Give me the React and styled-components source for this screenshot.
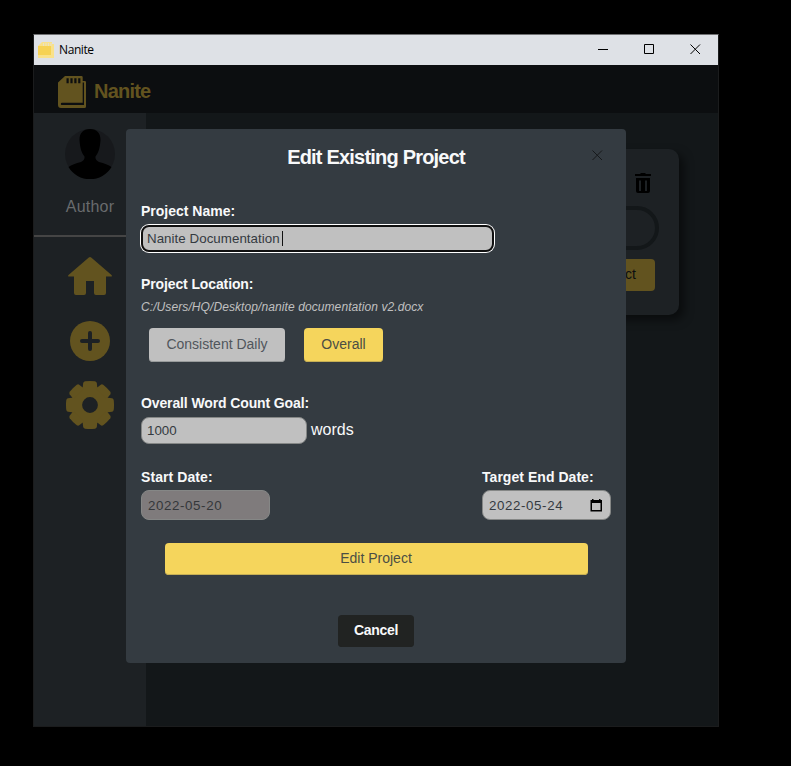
import React from "react";
import styled, { createGlobalStyle } from "styled-components";

const Global = createGlobalStyle`
  * { box-sizing: border-box; }
  body { margin: 0; background: #000; font-family: "Liberation Sans", Arial, sans-serif; }
`;

const Desktop = styled.div`
  height: 766px;
  padding: 34px 0 0 33px;
  background: #000;
  overflow: hidden;
`;
const Window = styled.div`
  position: relative;
  width: 686px;
  height: 693px;
  border: 1px solid #1b1c1d;
  border-top-color: #6f7072;
  background: #131719;
  display: flex;
  flex-direction: column;
`;
const TitleBar = styled.div`
  height: 30px;
  flex: none;
  background: #dee1e6;
  display: flex;
  align-items: center;
  color: #000;
  padding-left: 4px;
`;
const AppName = styled.span`
  flex: 1;
  margin-left: 5px;
  font: 12px/16px "Open Sans", "Noto Sans", sans-serif;
  letter-spacing: -0.4px;
`;
const WindowControls = styled.div`
  display: grid;
  grid-template-columns: repeat(3, 46px);
  justify-items: center;
  padding-bottom: 2px;
`;
const Header = styled.header`
  height: 48px;
  flex: none;
  background: #0c0e10;
  display: flex;
  align-items: center;
  padding: 5px 0 0 24px;
  color: #62531f;
`;
const Brand = styled.h1`
  margin: 0 0 1px 8px;
  font-size: 20px;
  line-height: 24px;
  letter-spacing: -0.8px;
`;
const Body = styled.div`
  flex: 1;
  display: flex;
`;
const Sidebar = styled.nav`
  width: 112px;
  background: #1d2124;
  display: flex;
  flex-direction: column;
  align-items: center;
  color: #62531f;
`;
const Profile = styled.div`
  width: 100%;
  height: 124px;
  padding-top: 16px;
  border-bottom: 2px solid #454545;
  display: flex;
  flex-direction: column;
  align-items: center;
  gap: 18px;
`;
const Author = styled.div`
  color: #696b6d;
  font-size: 16px;
  line-height: 20px;
  letter-spacing: 0.2px;
`;
const NavIcons = styled.div`
  display: flex;
  flex-direction: column;
  align-items: center;
  padding-top: 20px;
`;
const Main = styled.main`
  flex: 1;
  padding: 36px 39px;
  display: flex;
  justify-content: flex-end;
  align-items: flex-start;
`;
const Card = styled.section`
  width: 240px;
  height: 166px;
  border-radius: 10px;
  background: #1d2124;
  box-shadow: 5px 5px 10px rgba(0, 0, 0, 0.5);
  padding: 24px 24px 0;
  display: flex;
  flex-direction: column;
  align-items: flex-end;
`;
const TrashSlot = styled.div`
  height: 33px;
  padding-right: 4px;
`;
const Meter = styled.div`
  width: 190px;
  height: 44px;
  flex: none;
  margin-right: -4px;
  border: 4px solid #131719;
  border-radius: 22px;
`;
const CardButton = styled.button`
  margin-top: 9px;
  width: 130px;
  height: 32px;
  border: 0;
  border-radius: 4px;
  background: #62531f;
  color: #0c0e10;
  font: 14px "Liberation Sans", sans-serif;
  text-align: right;
  padding: 0 19px 3px 0;
`;

const Modal = styled.div`
  position: absolute;
  left: 92px;
  top: 94px;
  width: 500px;
  height: 534px;
  border-radius: 4px;
  background: #343b41;
  padding: 0 15px;
  color: #f8f9fa;
  display: flex;
  flex-direction: column;
  align-items: flex-start;
`;
const ModalHeader = styled.div`
  width: 100%;
  height: 72px;
  padding-top: 15px;
  display: grid;
  grid-template-columns: 1fr auto 1fr;
  align-items: start;
`;
const Title = styled.h2`
  grid-column: 2;
  margin: 0;
  font-size: 20px;
  line-height: 26px;
  letter-spacing: -0.8px;
`;
const Close = styled.button`
  justify-self: end;
  margin: 6px 8px 0 0;
  padding: 0;
  border: 0;
  height: 11px;
  background: none;
  display: flex;
`;
const Label = styled.label`
  display: block;
  margin-top: ${(p) => p.$top || 0}px;
  font-size: 14px;
  font-weight: bold;
  line-height: 20px;
  letter-spacing: ${(p) => p.$track || "0"};
  white-space: nowrap;
`;
const Field = styled.div`
  display: flex;
  align-items: center;
  width: ${(p) => p.$w}px;
  height: ${(p) => p.$h}px;
  padding: 0 6px 0 5px;
  border: 1px solid #858786;
  border-radius: 8px;
  background: ${(p) => (p.$disabled ? "#7f7b7c" : "#c0c0c0")};
  color: ${(p) => (p.$disabled ? "#34373a" : "#343a40")};
  font-size: 13.33px;
`;
const FocusField = styled(Field)`
  margin-top: 4px;
  padding: 0 4px;
  border: 2px solid #101010;
  box-shadow: 0 0 0 1px #fff;
  letter-spacing: 0.04px;
`;
const Caret = styled.i`
  width: 1px;
  height: 15px;
  margin-left: 2px;
  background: #111;
`;
const Path = styled.div`
  font-size: 12px;
  font-style: italic;
  line-height: 16px;
  color: #c0c0c0;
  letter-spacing: 0.09px;
  margin: 5px 0 13px;
  white-space: nowrap;
`;
const Modes = styled.div`
  display: flex;
  gap: 19px;
  padding-left: 8px;
`;
const Button = styled.button`
  width: ${(p) => p.$w}px;
  height: ${(p) => p.$h}px;
  flex: none;
  padding: 0 0 2px;
  border: 0;
  border-radius: 4px;
  background: ${(p) => p.$bg};
  color: ${(p) => p.$fg || "#4b4e44"};
  box-shadow: inset 0 -1px 0 ${(p) => p.$edge || p.$bg};
  font: ${(p) => (p.$bold ? "bold" : "normal")} 14px "Liberation Sans", sans-serif;
  letter-spacing: ${(p) => p.$track || "0"};
`;
const GoalRow = styled.div`
  display: flex;
  align-items: center;
  gap: 4px;
  margin: 4px 0 23px;
  font-size: 16px;
  line-height: 18px;
`;
const Suffix = styled.span`
  padding-bottom: 2px;
`;
const Dates = styled.div`
  width: 100%;
  display: flex;
  justify-content: space-between;
`;
const DateField = styled(Field)`
  margin-top: 3px;
  padding: 0 6px;
  justify-content: space-between;
  letter-spacing: 0.6px;
`;
const Actions = styled.div`
  width: 100%;
  padding-top: 23px;
  display: flex;
  flex-direction: column;
  align-items: center;
  gap: 40px;
`;

const SdIcon = () => (
  <svg width="28" height="32" viewBox="0 0 28 32" fill="currentColor">
    <path
      fillRule="evenodd"
      d="M7 0H23.500Q24.700 0 24.700 1.200V5H26.800Q28 5 28 6.200V30.500Q28 32 26.500 32H3Q0 32 0 29V6.500ZM8.500 2.300V7.200H10.700V2.300ZM12.400 2.300V7.200H14.600V2.300ZM16.300 2.300V7.200H18.500V2.300ZM20.200 2.300V7.200H22.400V2.300ZM24.700 6.500V26.800H4Q2.800 26.800 2.800 28T4 29H26V6.500Z"
    />
  </svg>
);
const TrashIcon = () => (
  <svg width="16" height="20" viewBox="0 0 16 20">
    <path
      fillRule="evenodd"
      d="M1 5H15V18Q15 20 13 20H3Q1 20 1 18ZM4 7.500V18H6V7.500ZM10 7.500V18H12V7.500ZM0 1H5L6 0H10L11 1H16V3H0Z"
      fill="#000"
    />
  </svg>
);
const CloseIcon = ({ color }) => (
  <svg width="11" height="11" viewBox="0 0 11 11" stroke={color} strokeWidth="1">
    <path d="M.5 .5 10 10M10 .5 .5 10" />
  </svg>
);
const TEETH = [0, 45, 90, 135, 180, 225, 270, 315];

export default function App() {
  return (
    <>
      <Global />
      <Desktop>
        <Window>
          <TitleBar>
            <svg width="16" height="16" viewBox="0 0 16 16">
              <path d="M4 0H14V2H16V16H0V4Z" fill="#f9e18a" />
              <path d="M0 4H13V13H0Z" fill="#f6d254" />
              <path d="M5.500 1V4M8 1V4M10.500 1V4M13 1V4" stroke="#e9e2c4" />
            </svg>
            <AppName>Nanite</AppName>
            <WindowControls>
              <svg width="11" height="11"><path d="M0 5.500H10" stroke="#000" /></svg>
              <svg width="11" height="11"><path d="M.5 .5H9.500V9.500H.5Z" fill="none" stroke="#000" /></svg>
              <CloseIcon color="#000" />
            </WindowControls>
          </TitleBar>
          <Header>
            <SdIcon />
            <Brand>Nanite</Brand>
          </Header>
          <Body>
            <Sidebar>
              <Profile>
                <svg width="50" height="50" viewBox="0 0 50 50">
                  <circle cx="25" cy="25" r="25" fill="#17191c" />
                  <path d="M25 0C18 0 14.500 4 14.500 11C15 19 16.500 24 19.500 27.500Q20 31 16 33Q8 35 3.500 38A25 25 0 0 0 46.500 38Q42 35 34 33Q30 31 30.500 27.500C33.500 24 35 19 35.500 11C35.500 4 32 0 25 0Z" fill="#000" />
                </svg>
                <Author>Author</Author>
              </Profile>
              <NavIcons>
                <svg width="44" height="38" viewBox="0 0 44 38" fill="currentColor">
                  <path d="M20.800 .5Q22-.5 23.200 .5L43.500 18Q44.500 19.500 43 19.500H38V36Q38 38 36 38H28Q26 38 26 36V24H18V36Q18 38 16 38H8Q6 38 6 36V19.500H1Q-.5 19.500 .5 18Z" />
                </svg>
                <svg width="40" height="86" viewBox="0 -26 40 86" fill="currentColor">
                  <circle cx="20" cy="20" r="20" />
                  <path d="M20 12V28M12 20H28" stroke="#1d2124" strokeWidth="4" strokeLinecap="round" />
                </svg>
                <svg width="48" height="48" viewBox="-24 -24 48 48" fill="currentColor">
                  <circle r="13.400" fill="none" stroke="currentColor" strokeWidth="11" />
                  {TEETH.map((a) => (
                    <path key={a} transform={`rotate(${a})`} d="M-7.500-16-6.800-22Q-6.500-23.300-5-23.700Q0-24.300 5-23.700Q6.500-23.300 6.800-22L7.500-16Z" />
                  ))}
                </svg>
              </NavIcons>
            </Sidebar>
            <Main>
              <Card>
                <TrashSlot>
                  <TrashIcon />
                </TrashSlot>
                <Meter />
                <CardButton>Edit Project</CardButton>
              </Card>
            </Main>
          </Body>
          <Modal>
            <ModalHeader>
              <Title>Edit Existing Project</Title>
              <Close aria-label="Close"><CloseIcon color="#16191b" /></Close>
            </ModalHeader>
            <Label>Project Name:</Label>
            <FocusField $w={353} $h={27}>
              Nanite Documentation<Caret />
            </FocusField>
            <Label $top={22} $track="-0.12px">Project Location:</Label>
            <Path>C:/Users/HQ/Desktop/nanite documentation v2.docx</Path>
            <Modes>
              <Button $w={136} $h={34} $bg="#c0c0c0" $edge="#989b9b" $fg="#50565c">Consistent Daily</Button>
              <Button $w={79} $h={34} $bg="#f5d55c" $edge="#c6af55">Overall</Button>
            </Modes>
            <Label $top={31} $track="-0.12px">Overall Word Count Goal:</Label>
            <GoalRow>
              <Field $w={166} $h={27}>1000</Field>
              <Suffix>words</Suffix>
            </GoalRow>
            <Dates>
              <div>
                <Label $track="0.08px">Start Date:</Label>
                <DateField $w={129} $h={30} $disabled>2022-05-20</DateField>
              </div>
              <div>
                <Label $track="0.04px">Target End Date:</Label>
                <DateField $w={129} $h={30}>
                  2022-05-24
                  <svg width="14" height="13" viewBox="0 0 14 13">
                    <path fillRule="evenodd" d="M2 0H3.500V1H9V0H10.500V1H12V12.500H.5V1H2ZM2 4V11H10.500V4Z" fill="#000" />
                  </svg>
                </DateField>
              </div>
            </Dates>
            <Actions>
              <Button $w={423} $h={32} $bg="#f5d55c" $edge="#c6af55">Edit Project</Button>
              <Button $w={76} $h={32} $bg="#212322" $fg="#f8f9fa" $bold $track="-0.3px">Cancel</Button>
            </Actions>
          </Modal>
        </Window>
      </Desktop>
    </>
  );
}
